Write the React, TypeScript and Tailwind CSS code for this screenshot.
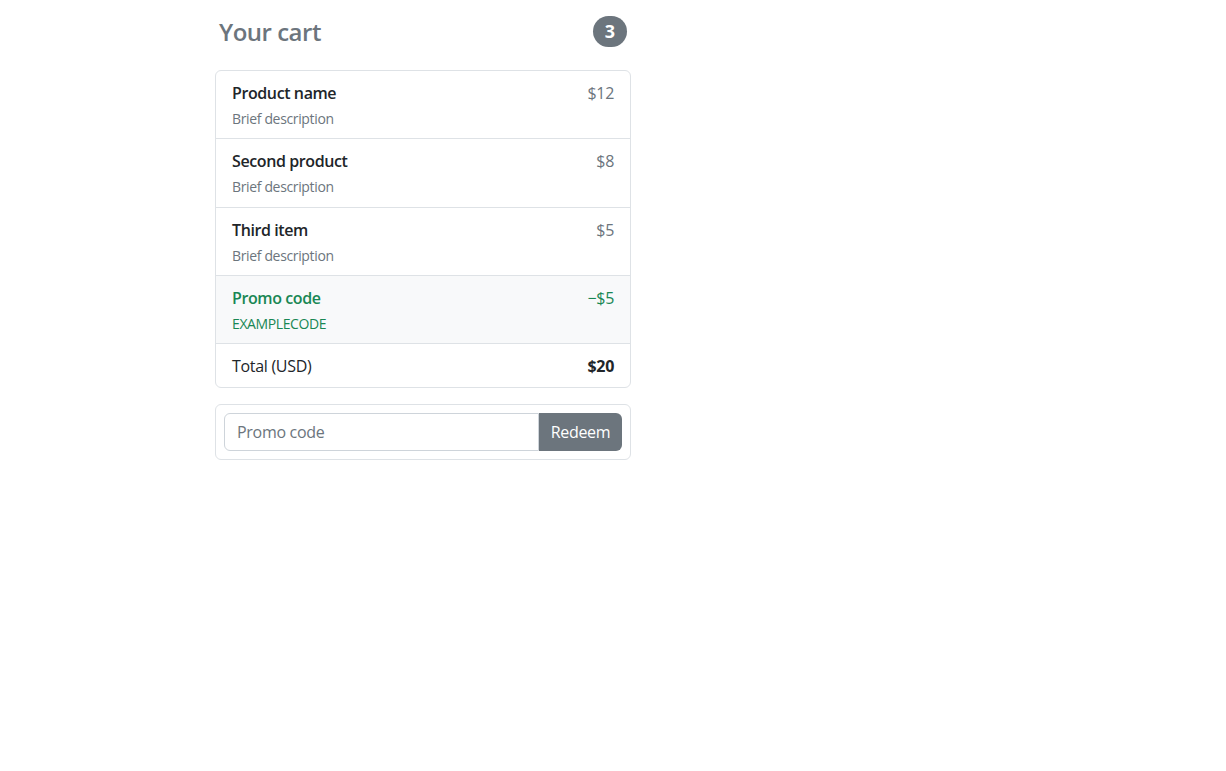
import React from "react";

const items = [
  { name: "Product name", desc: "Brief description", price: "$12" },
  { name: "Second product", desc: "Brief description", price: "$8" },
  { name: "Third item", desc: "Brief description", price: "$5" },
];

export default function App() {
  return (
    <div
      className="min-h-[771px] bg-white text-[#212529]"
      style={{ fontFamily: '"Open Sans", "Noto Sans", "Liberation Sans", sans-serif' }}
    >
      <div className="ml-[215px] w-[416px] pt-[15px]">
        <h4 className="flex h-[32px] items-center justify-between px-[4px]">
          <span className="pt-[1px] text-[24px] font-semibold leading-none tracking-[-0.5px] text-[#6c757d]">
            Your cart
          </span>
          <span className="flex h-[31px] w-[34px] items-center justify-center rounded-full bg-[#6c757d] text-[18px] font-bold leading-none text-white">
            3
          </span>
        </h4>

        <ul className="mt-[23px] overflow-hidden rounded-[6px] border border-[#dee2e6]">
          {items.map((it) => (
            <li
              key={it.name}
              className="flex justify-between border-b border-[#dee2e6] px-4 pb-[9.25px] pt-3"
            >
              <div>
                <h6 className="text-[16px] font-semibold leading-5 tracking-[-0.4px] text-[#212529]">
                  {it.name}
                </h6>
                <small className="mt-1.5 block text-[14px] leading-5 tracking-[-0.35px] text-[#6c757d]">
                  {it.desc}
                </small>
              </div>
              <span className="text-[16px] leading-5 tracking-[-0.3px] text-[#6c757d]">{it.price}</span>
            </li>
          ))}
          <li className="flex justify-between border-b border-[#dee2e6] bg-[#f8f9fa] px-4 pb-[9.25px] pt-3">
            <div className="text-[#198754]">
              <h6 className="text-[16px] font-semibold leading-5 tracking-[-0.4px]">Promo code</h6>
              <small className="mt-1.5 block text-[14px] leading-5 tracking-[-0.4px]">EXAMPLECODE</small>
            </div>
            <span className="text-[16px] leading-5 tracking-[-0.3px] text-[#198754]">−$5</span>
          </li>
          <li className="flex justify-between px-4 pb-[11px] pt-3 text-[16px] leading-5 tracking-[-0.3px]">
            <span>Total (USD)</span>
            <strong className="font-bold">$20</strong>
          </li>
        </ul>

        <form className="mt-4 rounded-[6px] border border-[#dee2e6] p-2">
          <div className="flex h-[38px]">
            <input
              type="text"
              placeholder="Promo code"
              className="min-w-0 flex-1 rounded-l-[6px] border border-[#ced4da] px-3 text-[16px] tracking-[-0.3px] text-[#212529] outline-none placeholder:text-[#6c757d]"
            />
            <button
              type="button"
              className="w-[83px] rounded-r-[6px] bg-[#6c757d] text-[16px] tracking-[-0.3px] text-white"
            >
              Redeem
            </button>
          </div>
        </form>
      </div>
    </div>
  );
}
